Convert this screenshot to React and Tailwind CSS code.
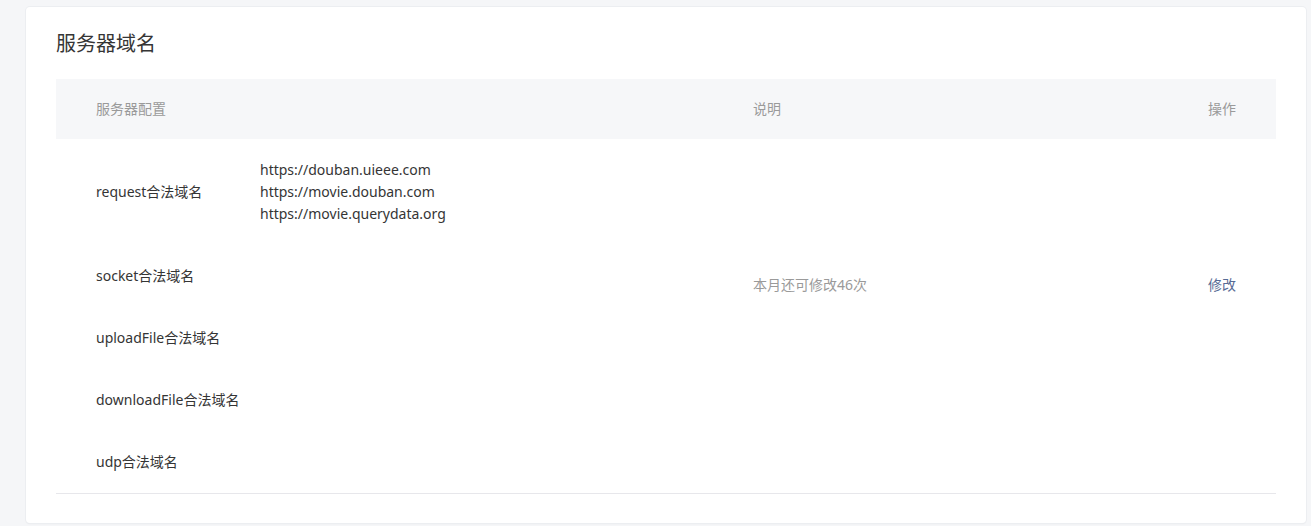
import React from "react";

const domains = [
  { label: "request合法域名", urls: ["https://douban.uieee.com", "https://movie.douban.com", "https://movie.querydata.org"] },
  { label: "socket合法域名", urls: [] },
  { label: "uploadFile合法域名", urls: [] },
  { label: "downloadFile合法域名", urls: [] },
  { label: "udp合法域名", urls: [] },
];

function App() {
  return (
    <div
      className="min-h-[526px] bg-[#f5f6f8] pt-[7px] pl-[26px] pr-[5px] pb-[3px] text-sm"
      style={{ fontFamily: '"Noto Sans", "Noto Sans CJK SC", sans-serif' }}
    >
      <div className="h-[516px] rounded bg-white px-[30px] pt-[22px] shadow-[0_0_0_1px_#eceef1,0_1px_2px_rgba(0,0,0,0.06)]">
        <h2 className="mb-5 text-[20px] leading-[30px] font-normal text-[#353535]">服务器域名</h2>

        <div className="flex h-[60px] items-center bg-[#f6f7f9] px-10 text-[#9a9a9a]">
          <div className="w-[657px]">服务器配置</div>
          <div className="flex-1">说明</div>
          <div>操作</div>
        </div>

        <div className="grid grid-cols-[697px_1fr_auto] border-b border-[#e7e7eb] pr-10">
          {domains.map((d, i) => (
            <div
              key={d.label}
              className="col-start-1 flex items-center py-5 pl-10 leading-[22px] text-[#353535]"
              style={{ gridRow: i + 1 }}
            >
              <div className="w-[164px] shrink-0">{d.label}</div>
              {d.urls.length > 0 && (
                <div className="flex flex-col">
                  {d.urls.map((u) => (
                    <span key={u}>{u}</span>
                  ))}
                </div>
              )}
            </div>
          ))}
          <div className="col-start-2 row-start-1 row-span-4 self-center text-[#9a9a9a] leading-[22px]">
            本月还可修改46次
          </div>
          <div className="col-start-3 row-start-1 row-span-4 self-center leading-[22px]">
            <a href="#" className="text-[#576b95]">修改</a>
          </div>
        </div>
      </div>
    </div>
  );
}

export default App;
